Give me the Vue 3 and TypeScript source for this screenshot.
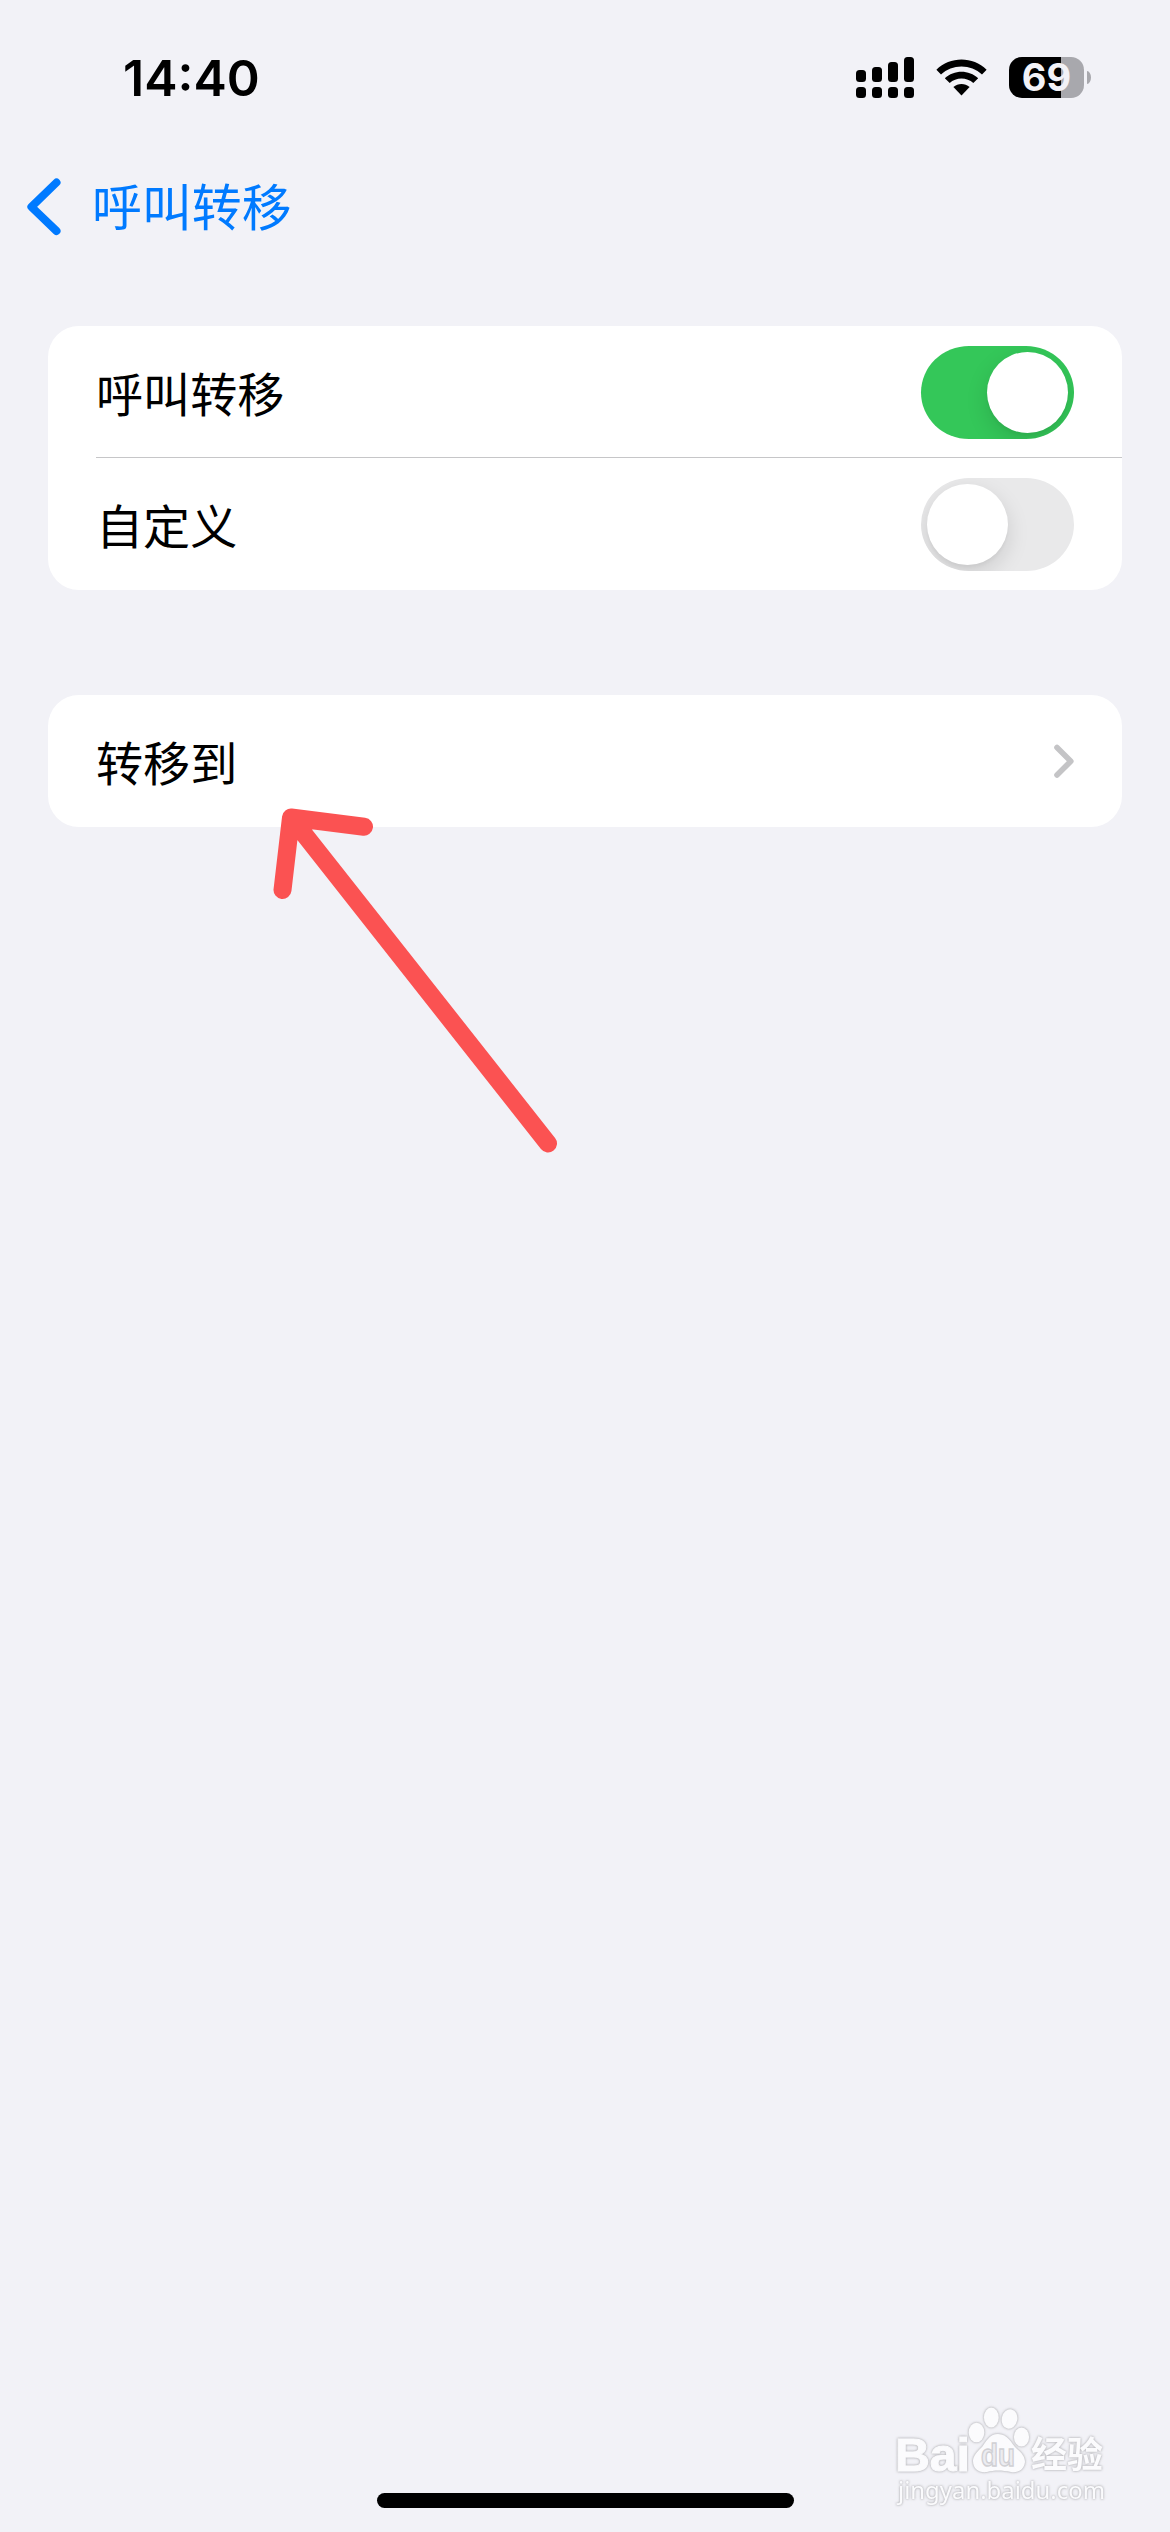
<script setup lang="ts">
import { ref } from 'vue'

interface SwitchRow {
  label: string
  on: boolean
}

const switches = ref<SwitchRow[]>([
  { label: '呼叫转移', on: true },
  { label: '自定义', on: false },
])

const signalBars: number[] = [12, 15, 20, 25]
</script>

<template>
  <div class="screen">
    <header class="status">
      <span class="time">14:40</span>
      <div class="indicators">
        <div class="signal">
          <div v-for="(h, i) in signalBars" :key="i" class="column">
            <i class="bar" :style="{ height: h + 'px' }"></i>
            <i class="dot"></i>
          </div>
        </div>
        <svg class="wifi" width="51" height="38" viewBox="0 0 51 38">
          <path d="M0.4 10.8C14 -2.9 37 -2.9 50.6 10.8L46 15.5C35 4.7 16 4.7 5 15.5Z" />
          <path d="M8.8 19.3C18 10.4 33 10.4 42.2 19.3L37.3 24.1C31 18 20 18 13.7 24.1Z" />
          <path d="M17.4 28C22 24 29 24 33.6 28L25.5 36.5Z" />
        </svg>
        <div class="battery">
          <div class="cell">69</div>
          <i class="nub"></i>
        </div>
      </div>
    </header>

    <nav class="nav">
      <svg width="36" height="60" viewBox="0 0 36 60">
        <path d="M30.5 5.5L5.4 29.8L30.5 54" />
      </svg>
      <span class="back">呼叫转移</span>
    </nav>

    <main class="groups">
      <section class="card">
        <div v-for="row in switches" :key="row.label" class="row">
          <span class="label">{{ row.label }}</span>
          <button
            class="toggle"
            :class="{ on: row.on }"
            role="switch"
            :aria-checked="row.on"
            :aria-label="row.label"
            @click="row.on = !row.on"
          >
            <i class="knob"></i>
          </button>
        </div>
      </section>
      <section class="card">
        <div class="row">
          <span class="label">转移到</span>
          <svg class="more" width="22" height="36" viewBox="0 0 22 36">
            <path d="M5 4.4L18.8 18.2L5 32" />
          </svg>
        </div>
      </section>
    </main>

    <svg class="arrow" width="320" height="380" viewBox="0 0 320 380">
      <path d="M22.5 100L31 27.5L104 36.7M31 27.5L288 353.5" />
    </svg>

    <svg class="watermark" width="250" height="130" viewBox="0 0 250 130">
      <g class="mark">
        <text class="latin" x="15" y="80.5" textLength="75" lengthAdjust="spacingAndGlyphs">Bai</text>
        <ellipse cx="96.5" cy="42.5" rx="7.8" ry="9.8" />
        <ellipse cx="111.3" cy="27.5" rx="7.4" ry="10" />
        <ellipse cx="129.5" cy="29" rx="7.8" ry="9.8" transform="rotate(12 129.5 29)" />
        <ellipse cx="141.5" cy="47" rx="7.6" ry="9.6" />
        <path
          d="M118 44C128 44 131 53 137 59C142 63 145 67 145 72C144 80 138 83 131 82C122 80 114 80 107 82C99 83 93 79 93 71C93 66 97 62 102 57C106 52 109 44 118 44Z"
        />
        <text class="cjk" x="151" y="78" textLength="72" lengthAdjust="spacingAndGlyphs">经验</text>
        <text class="site" x="18" y="109" textLength="207" lengthAdjust="spacingAndGlyphs">jingyan.baidu.com</text>
      </g>
      <text class="du" x="101" y="76" textLength="34" lengthAdjust="spacingAndGlyphs">du</text>
    </svg>

    <div class="home"></div>
  </div>
</template>

<style>
body {
  background: #f2f2f7;
}
</style>

<style scoped>
.screen {
  position: relative;
  box-sizing: border-box;
  width: 1170px;
  height: 2532px;
  overflow: hidden;
  display: flex;
  flex-direction: column;
  background: #f2f2f7;
  color: #000;
  font-family: 'Inter', 'Noto Sans CJK SC', sans-serif;
}

.status {
  box-sizing: border-box;
  height: 156px;
  padding: 0 79px 0 123px;
  display: flex;
  justify-content: space-between;
}

.time {
  height: 156px;
  line-height: 156px;
  font-size: 50px;
  font-weight: 600;
}

.indicators {
  display: flex;
  align-items: flex-start;
  padding-top: 57px;
}

.signal {
  display: flex;
  gap: 6px;
  height: 41px;
  align-items: flex-end;
}

.column {
  display: flex;
  flex-direction: column;
  gap: 5px;
}

.bar,
.dot {
  display: block;
  width: 10px;
  border-radius: 3.5px;
  background: #000;
}

.dot {
  height: 11px;
}

.wifi {
  margin: 2px 22px 0;
}

.battery {
  display: flex;
  align-items: center;
  gap: 3px;
}

.cell {
  width: 75px;
  height: 41px;
  border-radius: 13px;
  background: linear-gradient(90deg, #000 52px, #a8a8ad 52px);
  color: #f2f2f7;
  font-size: 38px;
  font-weight: 700;
  line-height: 41px;
  text-align: center;
}

.nub {
  width: 4px;
  height: 13px;
  border-radius: 0 4px 4px 0 / 0 6.5px 6.5px 0;
  background: #a8a8ad;
}

.nav {
  height: 102px;
  padding-left: 26px;
  display: flex;
  align-items: center;
  gap: 30px;
  color: #007aff;
}

.nav svg path {
  fill: none;
  stroke: #007aff;
  stroke-width: 8;
  stroke-linecap: round;
  stroke-linejoin: round;
}

.back {
  padding-top: 2px;
  font-size: 49.9px;
  line-height: 72px;
}

.groups {
  flex: 1;
  padding: 68px 48px 0;
  display: flex;
  flex-direction: column;
  gap: 105px;
}

.card {
  border-radius: 31px;
  background: #fff;
}

.row {
  height: 132px;
  margin-left: 48px;
  padding-right: 48px;
  display: flex;
  align-items: center;
  justify-content: space-between;
  box-sizing: border-box;
}

.row + .row {
  box-shadow: 0 -1px 0 #c6c6c8;
}

.label {
  padding-top: 5px;
  font-size: 47.1px;
  line-height: 70px;
}

.toggle {
  width: 153px;
  height: 93px;
  padding: 6px;
  border: 0;
  border-radius: 48px / 46.5px;
  background: #e9e9ea;
  display: flex;
  overflow: hidden;
}

.toggle.on {
  background: #34c759;
  justify-content: flex-end;
}

.knob {
  width: 81px;
  height: 81px;
  border-radius: 50%;
  background: #fff;
  box-shadow: 0 8px 22px rgba(0, 0, 0, 0.13), 0 3px 3px rgba(0, 0, 0, 0.03);
}

.more path {
  fill: none;
  stroke: #c4c4c6;
  stroke-width: 5.6;
  stroke-linecap: round;
  stroke-linejoin: round;
}

.arrow {
  position: absolute;
  left: 260px;
  top: 790px;
}

.arrow path {
  fill: none;
  stroke: #fb5252;
  stroke-width: 18;
  stroke-linecap: round;
  stroke-linejoin: round;
}

.watermark {
  position: absolute;
  left: 880px;
  top: 2390px;
}

.mark {
  fill: #fbfbfd;
  filter: drop-shadow(0 0 1px #b4b4b8) drop-shadow(0 0 1px #d4d4d8);
}

.latin {
  font: 700 47px 'Liberation Sans', sans-serif;
  stroke: #fbfbfd;
  stroke-width: 1;
}

.du {
  font: 700 31px 'Liberation Sans', sans-serif;
  fill: #ececf0;
  stroke: #d0d0d4;
  stroke-width: 1.4;
}

.cjk {
  font: 700 36px 'Noto Sans CJK SC', sans-serif;
}

.site {
  font: 400 24px 'Noto Sans', sans-serif;
}

.home {
  width: 417px;
  height: 15px;
  margin: 0 auto 24px;
  border-radius: 8px;
  background: #000;
}
</style>
